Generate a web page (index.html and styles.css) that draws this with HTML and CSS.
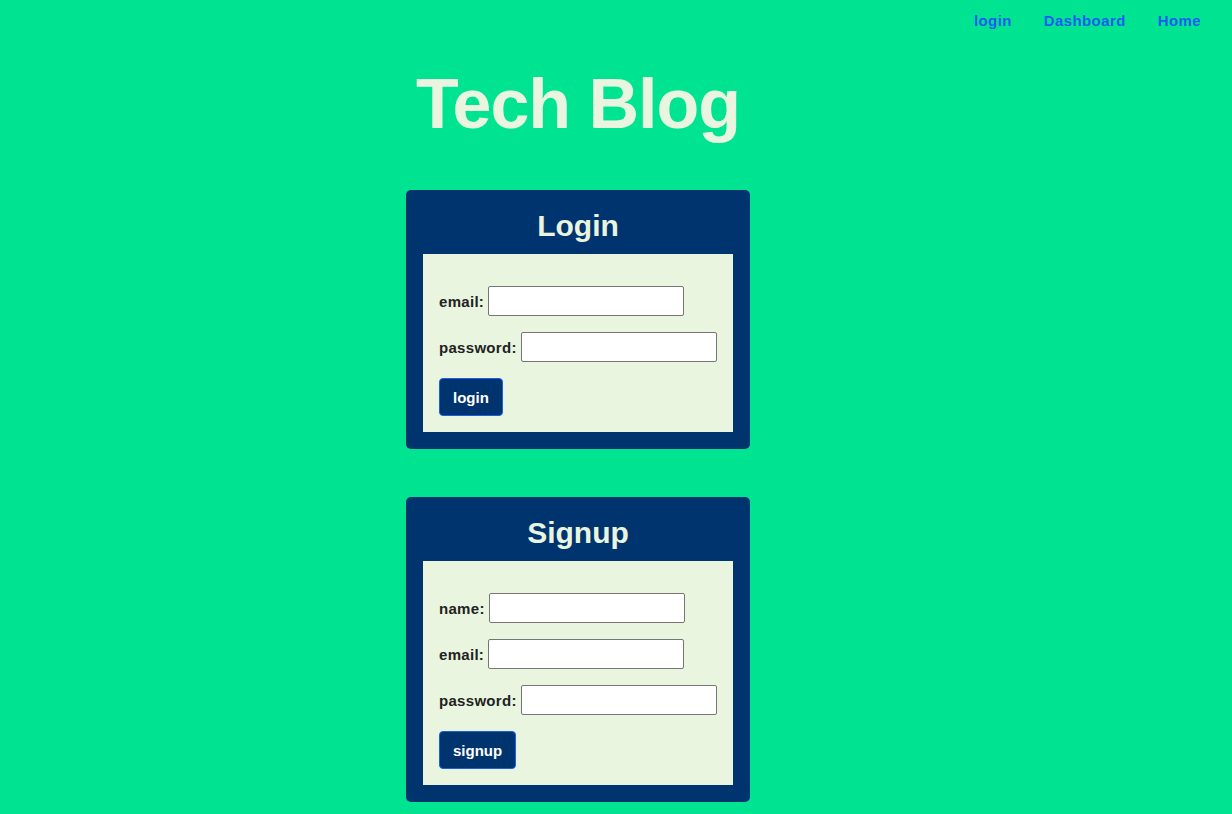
FILE: index.html
```html
<!DOCTYPE html>
<html lang="en">
<head>
<meta charset="utf-8">
<title>Tech Blog</title>
<link rel="stylesheet" href="styles.css">
</head>
<body>
<nav class="nav">
  <a class="nav-link" href="#">login</a>
  <a class="nav-link" href="#">Dashboard</a>
  <a class="nav-link" href="#">Home</a>
</nav>
<main class="main">
  <h1 class="site-title">Tech Blog</h1>
  <section class="card">
    <h2 class="card-title">Login</h2>
    <form class="panel">
      <div class="row"><label class="label">email:</label><input class="field" type="text"></div>
      <div class="row"><label class="label">password:</label><input class="field" type="password"></div>
      <button class="btn" type="button">login</button>
    </form>
  </section>
  <section class="card">
    <h2 class="card-title">Signup</h2>
    <form class="panel">
      <div class="row"><label class="label">name:</label><input class="field" type="text"></div>
      <div class="row"><label class="label">email:</label><input class="field" type="text"></div>
      <div class="row"><label class="label">password:</label><input class="field" type="password"></div>
      <button class="btn" type="button">signup</button>
    </form>
  </section>
</main>
</body>
</html>
```
FILE: styles.css
```css
* { box-sizing: border-box; }
html, body {
  margin: 0;
  background: #00e492;
  font-family: "Liberation Sans", Arial, sans-serif;
}
.nav {
  display: flex;
  justify-content: flex-end;
  gap: 32px;
  padding: 12px 31px 0 0;
  line-height: 18px;
}
.nav-link {
  color: #1d5cf0;
  font-weight: 700;
  font-size: 15px;
  letter-spacing: 0.4px;
  text-decoration: none;
}
.main {
  width: 1156px;
  display: flex;
  flex-direction: column;
  align-items: center;
}
.site-title {
  margin: 34px 0 46px;
  font-size: 70px;
  line-height: 80px;
  letter-spacing: -1px;
  color: #eaf5e0;
  font-weight: 700;
}
.card {
  width: 344px;
  background: #00346e;
  border-radius: 5px;
  padding: 18px 17px 17px;
  margin-bottom: 48px;
}
.card-title {
  margin: 0 0 10px;
  text-align: center;
  font-size: 30px;
  line-height: 36px;
  color: #eaf5e0;
  font-weight: 700;
}
.panel {
  background: #eaf5e0;
  padding: 32px 16px 16px;
  display: flex;
  flex-direction: column;
  align-items: flex-start;
  gap: 16px;
  margin: 0;
}
.row {
  display: flex;
  align-items: center;
  gap: 4px;
}
.label {
  font-size: 15px;
  font-weight: 700;
  letter-spacing: 0.3px;
  color: #222;
}
.field {
  width: 196px;
  height: 30px;
  border: 1px solid #767676;
  border-radius: 2px;
  background: #fff;
  margin: 0;
}
.btn {
  height: 38px;
  padding: 0 13px;
  background: #00346e;
  color: #fff;
  border: 1px solid #1b5ee8;
  border-radius: 4px;
  font-family: inherit;
  font-size: 15px;
  font-weight: 700;
}
```
